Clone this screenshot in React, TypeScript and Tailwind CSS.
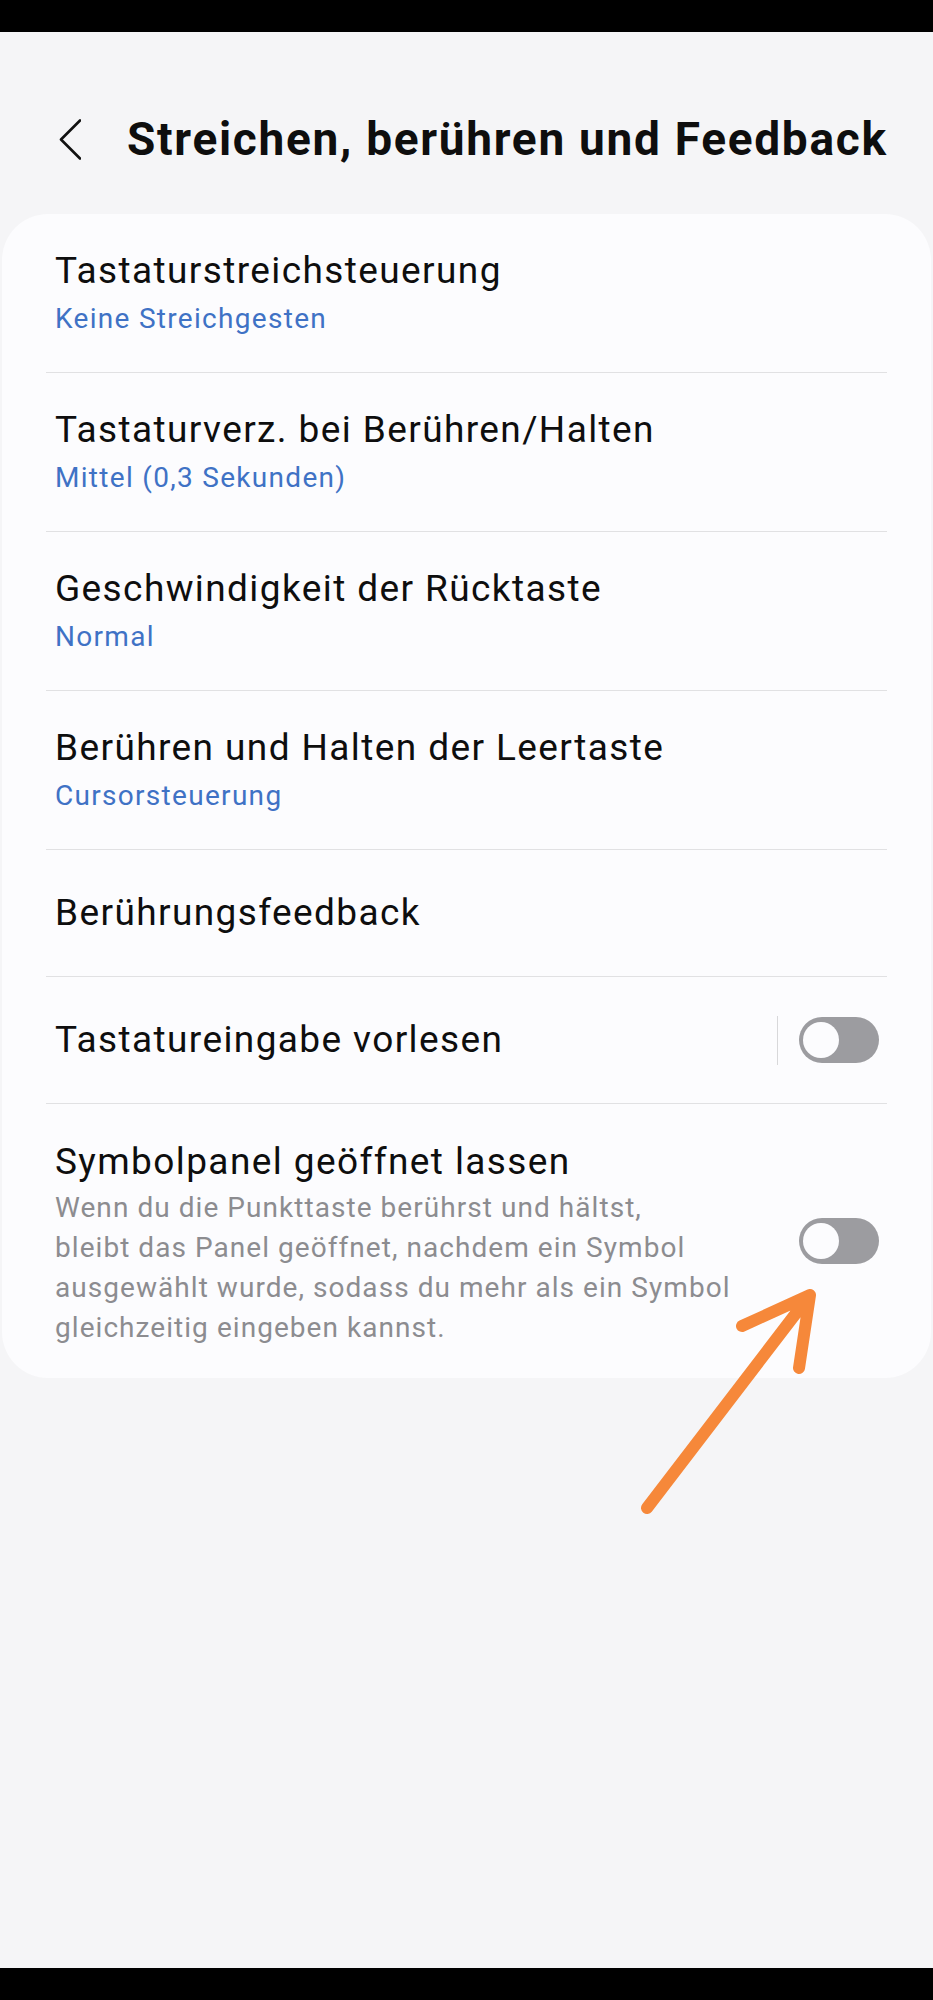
import { ReactNode } from "react";

type Item = {
  title: string;
  value?: string;
};

const items: Item[] = [
  { title: "Tastaturstreichsteuerung", value: "Keine Streichgesten" },
  { title: "Tastaturverz. bei Berühren/Halten", value: "Mittel (0,3 Sekunden)" },
  { title: "Geschwindigkeit der Rücktaste", value: "Normal" },
  { title: "Berühren und Halten der Leertaste", value: "Cursorsteuerung" },
];

function Toggle({ className = "" }: { className?: string }) {
  return (
    <div
      className={
        "flex h-[46px] w-[80px] shrink-0 items-center rounded-full bg-[#9c9ca0] pl-[4px] " + className
      }
    >
      <div className="h-[36px] w-[36px] rounded-full bg-[#fcfcfe]" />
    </div>
  );
}

function Divider() {
  return <div className="h-px bg-[#e1e1e3]" />;
}

function Row({ children }: { children: ReactNode }) {
  return <div className="pl-[9px] pr-[8px]">{children}</div>;
}

export default function App() {
  return (
    <div
      className="relative flex h-[2000px] w-full flex-col bg-[#f5f5f7] text-[#0e0e0e]"
      style={{ fontFamily: "Roboto, 'Noto Sans', sans-serif" }}
    >
      {/* status bar strip */}
      <div className="h-[32px] bg-black" />

      {/* header */}
      <div className="flex items-center pl-[59px] pt-[80px] pb-[48px]">
        <svg width="22" height="41" viewBox="0 0 22 41" fill="none">
          <path
            d="M21 1.5L2 20.5L21 39.5"
            stroke="#111"
            strokeWidth="2.6"
            strokeLinecap="round"
            strokeLinejoin="round"
          />
        </svg>
        <h1 className="ml-[46px] text-[46px] leading-[54px] font-bold tracking-[1.7px]">
          Streichen, berühren und Feedback
        </h1>
      </div>

      {/* settings card */}
      <div className="mx-[2px] rounded-[46px] bg-[#fcfcfe] px-[44px]">
        {items.map((it) => (
          <div key={it.title}>
            <Row>
              <div className="pt-[35px] pb-[36px]">
                <div className="text-[37px] leading-[44px] tracking-[1.4px]">{it.title}</div>
                <div className="mt-[9px] text-[28px] leading-[34px] tracking-[1.3px] text-[#3f72c5]">
                  {it.value}
                </div>
              </div>
            </Row>
            <Divider />
          </div>
        ))}

        <Row>
          <div className="pt-[41px] pb-[41px] text-[37px] leading-[44px] tracking-[1.4px]">
            Berührungsfeedback
          </div>
        </Row>
        <Divider />

        <Row>
          <div className="flex h-[126px] items-center">
            <div className="flex-1 text-[37px] leading-[44px] tracking-[1.4px]">
              Tastatureingabe vorlesen
            </div>
            <div className="mr-[21px] h-[49px] w-[1.5px] bg-[#d8d8da]" />
            <Toggle />
          </div>
        </Row>
        <Divider />

        <Row>
          <div className="flex items-center pt-[36px] pb-[30px]">
            <div className="flex-1">
              <div className="text-[37px] leading-[44px] tracking-[1.4px]">
                Symbolpanel geöffnet lassen
              </div>
              <p className="mt-[4px] text-[28px] leading-[40px] tracking-[1.05px] text-[#8c8c90]">
                Wenn du die Punkttaste berührst und hältst,
                <br />
                bleibt das Panel geöffnet, nachdem ein Symbol
                <br />
                ausgewählt wurde, sodass du mehr als ein Symbol
                <br />
                gleichzeitig eingeben kannst.
              </p>
            </div>
            <Toggle className="mb-[6px]" />
          </div>
        </Row>
      </div>

      <div className="flex-1" />

      {/* nav bar strip */}
      <div className="h-[32px] bg-black" />

      {/* orange annotation arrow */}
      <svg
        className="pointer-events-none absolute left-0 top-0"
        width="933"
        height="2000"
        viewBox="0 0 933 2000"
        fill="none"
      >
        <path
          d="M647 1508 L810 1295 M742 1326 L810 1295 L799 1368"
          stroke="#f6883a"
          strokeWidth="12"
          strokeLinecap="round"
          strokeLinejoin="round"
        />
      </svg>
    </div>
  );
}
